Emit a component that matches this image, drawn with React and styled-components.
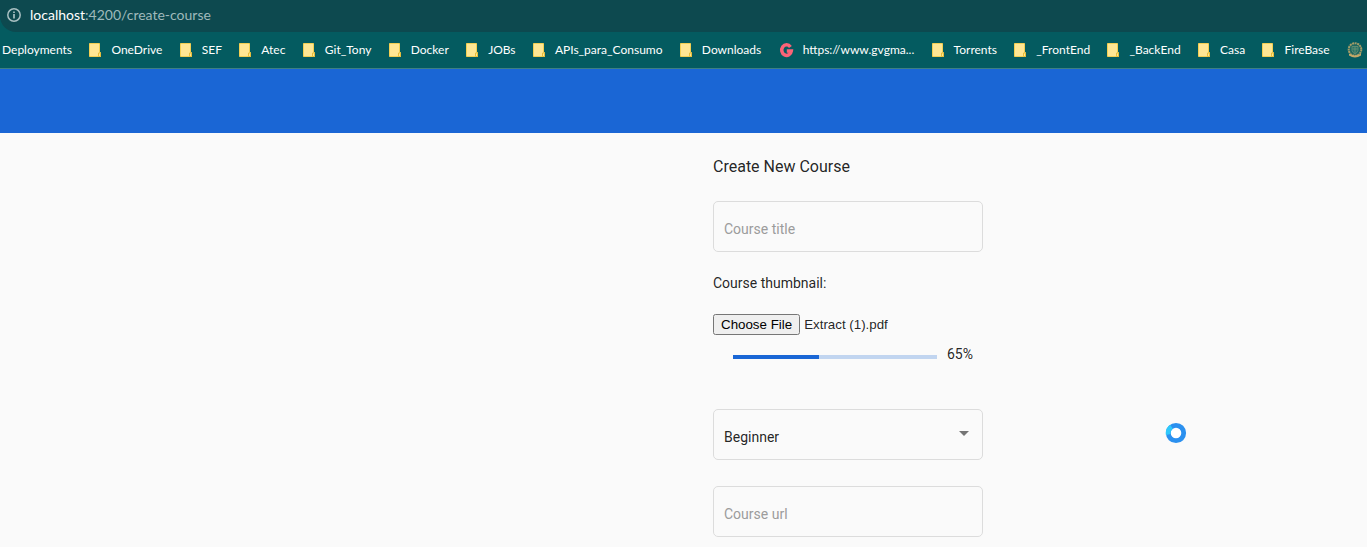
import React, { useEffect, useRef } from "react";
import styled, { createGlobalStyle } from "styled-components";

const GlobalStyle = createGlobalStyle`
  * { box-sizing: border-box; }
  body {
    margin: 0;
    background: #fafafa;
    color: rgba(0, 0, 0, 0.87);
    font-family: Roboto, sans-serif;
    font-size: 14px;
  }
`;

const Page = styled.div`
  overflow: hidden;
`;

const BrowserBar = styled.header`
  background: #045b60;
  border-bottom: 1px solid #3e7f83;
  color: #fff;
  font-family: Lato, "Open Sans", sans-serif;
`;

const AddressBar = styled.div`
  display: flex;
  align-items: center;
  gap: 9px;
  height: 32px;
  padding: 0 7px 2px;
  background: #0d494f;
  border-bottom-left-radius: 16px;
  font-size: 14px;
  line-height: 18px;
`;

const UrlPath = styled.span`
  color: #9fb9bb;
`;

const Bookmarks = styled.nav`
  display: flex;
  align-items: center;
  justify-content: space-between;
  height: 36px;
  padding: 0 4px 0 2px;
`;

const Bookmark = styled.a`
  display: flex;
  flex: none;
  align-items: center;
  gap: 8px;
  color: #fff;
  font-size: 12px;
  line-height: 16px;
  text-decoration: none;
  white-space: nowrap;

  svg { flex: none; }
`;

const AppToolbar = styled.div`
  height: 64px;
  background: #1a66d5;
`;

const Main = styled.main`
  display: grid;
  grid-template-columns: 713fr 270px 384fr;
`;

const Form = styled.form`
  grid-column: 2;
  display: flex;
  flex-direction: column;
  padding: 24px 0 10px;
`;

const Title = styled.h1`
  margin: 0 0 24px;
  font-size: 16px;
  font-weight: 400;
  line-height: 20px;
`;

const Field = styled.div`
  position: relative;
  height: 51px;
  margin-bottom: ${(p) => p.$gap || 0}px;
`;

const controlStyles = `
  width: 100%;
  height: 100%;
  padding: 5px 10px 0;
  border: 1px solid #dcdcdc;
  border-radius: 5px;
  background: transparent;
  color: rgba(0, 0, 0, 0.87);
  font: 14px Roboto, sans-serif;
  outline: none;
`;

const TextInput = styled.input`
  ${controlStyles}
  &::placeholder { color: #9c9c9c; opacity: 1; }
`;

const Select = styled.select`
  ${controlStyles}
  appearance: none;
`;

const Arrow = styled.svg`
  position: absolute;
  top: 22px;
  right: 14px;
  pointer-events: none;
`;

const ThumbnailLabel = styled.label`
  margin-bottom: 21px;
  line-height: 20px;
`;

const FileInput = styled.input`
  width: 100%;
  height: 22px;
  font-family: "Liberation Sans", Arial, sans-serif;
`;

const ProgressRow = styled.div`
  display: flex;
  align-items: center;
  gap: 10px;
  height: 20px;
  margin: 8px 10px 45px 20px;
`;

const Track = styled.div`
  flex: 1;
  height: 4px;
  margin-top: 6px;
  background: #c1d5f0;
`;

const Fill = styled.div`
  height: 100%;
  background: #1a66d5;
`;

const Percent = styled.span`
  width: 26px;
`;

const BusyCursor = styled.svg`
  position: absolute;
  top: 422px;
  left: 86%;
  margin-left: -11px;
`;

const FolderIcon = () => (
  <svg width="14" height="16" viewBox="0 0 14 16" aria-hidden="true">
    <path d="M.5 1.500h10v9h1v4h-11z" fill="#ffe694" stroke="#f3cf53" />
    <path d="M9.500 14.500v-3.500h2v3.500z" fill="#ffe694" stroke="#e9bd3a" />
  </svg>
);

const GIcon = () => (
  <svg width="16" height="16" viewBox="0 0 16 16" aria-hidden="true">
    <path
      d="M11.400 4.900A4.800 5.300 0 1 0 12.300 8.900H7.800"
      fill="none"
      stroke="#fb6377"
      strokeWidth="3.500"
    />
  </svg>
);

const CrestIcon = () => (
  <svg width="16" height="16" viewBox="0 0 16 16" aria-hidden="true">
    <circle cx="8" cy="7.500" r="6.300" fill="#1c6660" stroke="#a39c68" strokeWidth="2" strokeDasharray="2 .6" />
    <path d="M5 4.500h6v4q-1 2.500-3 3.500-2-1-3-3.500zM8 5v6M5.500 7h5" fill="#287467" stroke="#6c9275" strokeWidth=".8" />
    <path d="M2 11.500q6 4 12 0v2q-6 4-12 0z" fill="#c5a968" />
  </svg>
);

const InfoIcon = () => (
  <svg width="14" height="14" viewBox="0 0 14 14" aria-hidden="true">
    <circle cx="7" cy="7" r="6.200" fill="none" stroke="#a9c0c2" strokeWidth="1.500" />
    <path d="M7 6v4.500M7 3.400v1.600" stroke="#a9c0c2" strokeWidth="1.700" />
  </svg>
);

const BOOKMARKS = [
  { label: "Deployments" },
  { label: "OneDrive", Icon: FolderIcon },
  { label: "SEF", Icon: FolderIcon },
  { label: "Atec", Icon: FolderIcon },
  { label: "Git_Tony", Icon: FolderIcon },
  { label: "Docker", Icon: FolderIcon },
  { label: "JOBs", Icon: FolderIcon },
  { label: "APIs_para_Consumo", Icon: FolderIcon },
  { label: "Downloads", Icon: FolderIcon },
  { label: "https://www.gvgma...", Icon: GIcon },
  { label: "Torrents", Icon: FolderIcon },
  { label: "_FrontEnd", Icon: FolderIcon },
  { label: "_BackEnd", Icon: FolderIcon },
  { label: "Casa", Icon: FolderIcon },
  { label: "FireBase", Icon: FolderIcon },
  { label: "", Icon: CrestIcon },
];

function ThumbnailInput() {
  const ref = useRef(null);
  useEffect(() => {
    const transfer = new DataTransfer();
    transfer.items.add(new File(["%PDF"], "Extract (1).pdf", { type: "application/pdf" }));
    ref.current.files = transfer.files;
  }, []);
  return <FileInput ref={ref} id="thumbnail" type="file" />;
}

export default function App() {
  return (
    <Page>
      <GlobalStyle />
      <BrowserBar>
        <AddressBar>
          <InfoIcon />
          <span>
            localhost<UrlPath>:4200/create-course</UrlPath>
          </span>
        </AddressBar>
        <Bookmarks aria-label="Bookmarks">
          {BOOKMARKS.map(({ label, Icon }, i) => (
            <Bookmark href="#" key={i}>
              {Icon && <Icon />}
              {label}
            </Bookmark>
          ))}
        </Bookmarks>
      </BrowserBar>
      <AppToolbar />
      <Main>
        <Form>
          <Title>Create New Course</Title>
          <Field $gap={21}>
            <TextInput aria-label="Course title" placeholder="Course title" />
          </Field>
          <ThumbnailLabel htmlFor="thumbnail">Course thumbnail:</ThumbnailLabel>
          <ThumbnailInput />
          <ProgressRow>
            <Track role="progressbar" aria-label="Upload" aria-valuenow={42}>
              <Fill style={{ width: "42%" }} />
            </Track>
            <Percent>65%</Percent>
          </ProgressRow>
          <Field $gap={26}>
            <Select aria-label="Course level" defaultValue="Beginner">
              <option>Beginner</option>
            </Select>
            <Arrow width="10" height="5" viewBox="0 0 10 5" aria-hidden="true">
              <path d="M0 0h10l-5 5z" fill="#757575" />
            </Arrow>
          </Field>
          <Field>
            <TextInput aria-label="Course url" placeholder="Course url" />
          </Field>
        </Form>
      </Main>
      <BusyCursor width="22" height="22" viewBox="0 0 22 22" aria-hidden="true">
        <circle cx="11" cy="11" r="7.700" fill="#fff" stroke="#2b90ef" strokeWidth="4.800" />
        <path d="M3.300 12.500A7.700 7.700 0 0 1 6.500 4.700" fill="none" stroke="#2fc8fb" strokeWidth="4.800" />
      </BusyCursor>
    </Page>
  );
}
